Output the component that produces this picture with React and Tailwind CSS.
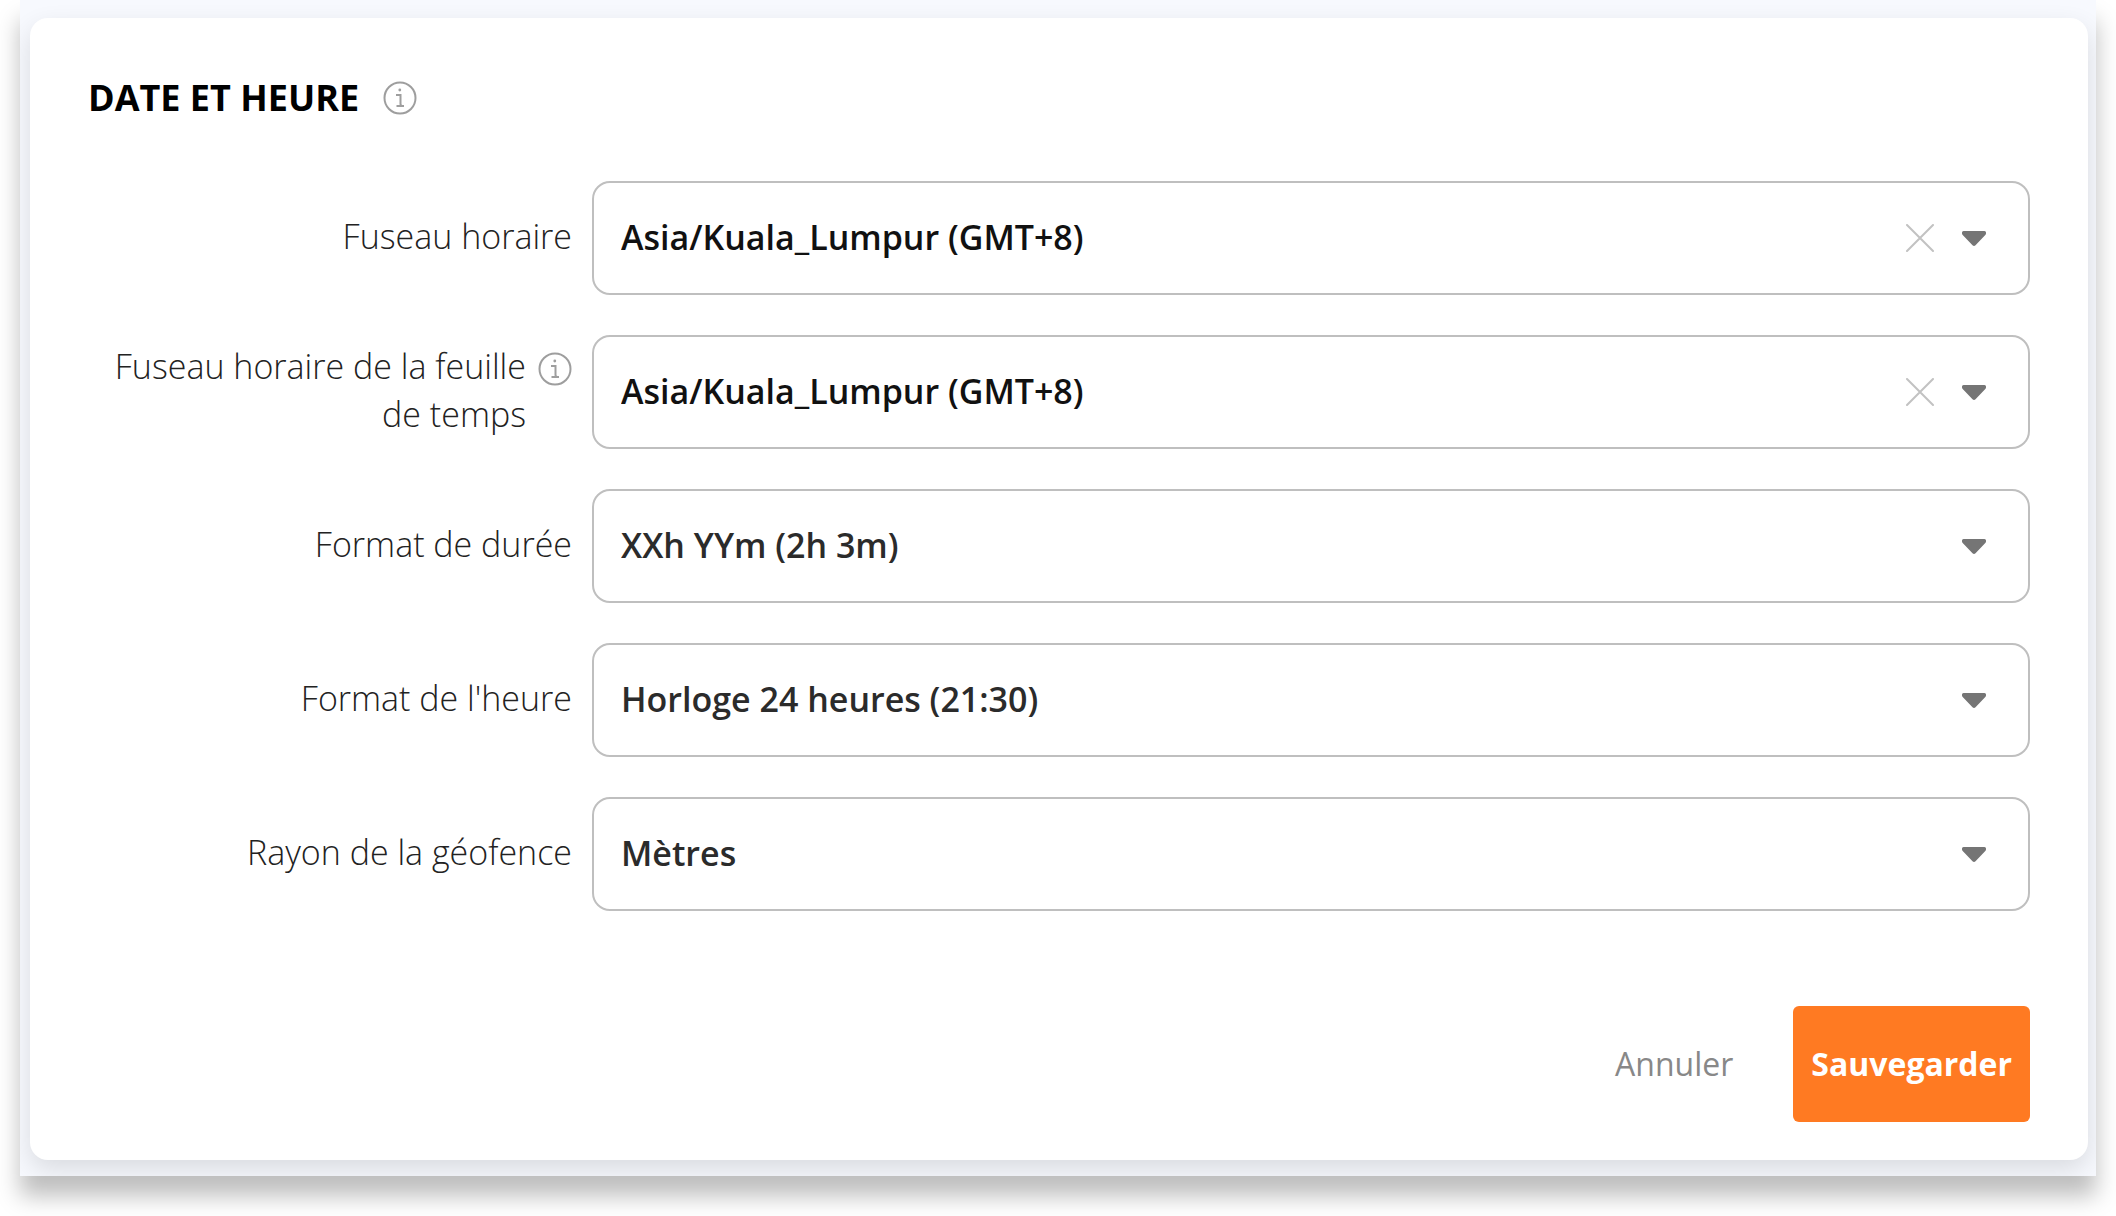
import React from "react";

function InfoIcon() {
  return (
    <svg viewBox="0 0 34 34" className="size-[34px]" fill="none" stroke="#9e9e9e" strokeWidth="2" aria-hidden="true">
      <circle cx="17" cy="17" r="15.5" />
      <path d="M13 14h4.5v9q0 2 2 2h1.5M13.5 25h5" />
      <circle cx="16.8" cy="9" r="1.4" fill="#9e9e9e" stroke="none" />
    </svg>
  );
}

function ClearIcon() {
  return (
    <svg viewBox="0 0 28 28" className="size-7" fill="none" stroke="#c2c2c2" strokeWidth="2" strokeLinecap="round" aria-hidden="true">
      <path d="M1 1l26 26M27 1L1 27" />
    </svg>
  );
}

function CaretIcon() {
  return (
    <svg viewBox="0 0 24 15" className="h-[15px] w-6" fill="#757575" aria-hidden="true">
      <path d="M1.5 0h21q1.5 0 1.5 1.5v1q0 .8-.7 1.5l-9.8 10.2q-1.5 1.4-3 0L.7 4Q0 3.3 0 2.5v-1Q0 0 1.5 0z" />
    </svg>
  );
}

const fields = [
  { id: "timezone", label: "Fuseau horaire", value: "Asia/Kuala_Lumpur (GMT+8)", clearable: true },
  { id: "timesheet-timezone", label: "Fuseau horaire de la feuille de temps", value: "Asia/Kuala_Lumpur (GMT+8)", clearable: true, info: true },
  { id: "duration-format", label: "Format de durée", value: "XXh YYm (2h 3m)" },
  { id: "time-format", label: "Format de l'heure", value: "Horloge 24 heures (21:30)" },
  { id: "geofence-radius", label: "Rayon de la géofence", value: "Mètres" },
];

function Field({ id, label, value, clearable, info }) {
  return (
    <div className="flex items-center gap-5">
      <div className="flex w-[484px] shrink-0 items-start justify-end gap-3 pb-1 text-right text-[34px] leading-[48px] font-light text-[#222222]">
        <label htmlFor={id}>{label}</label>
        {info && (
          <button type="button" aria-label="Information" className="mt-2.5 shrink-0">
            <InfoIcon />
          </button>
        )}
      </div>
      <div className="relative min-w-0 flex-1">
        <select
          id={id}
          className={`block h-[114px] w-full appearance-none rounded-[18px] border-2 border-[#bfbfbf] bg-white pr-36 pb-0.5 pl-[27px] text-[34px] font-semibold ${
            clearable ? "text-[#111111]" : "text-[#2b2b2b]"
          }`}
        >
          <option>{value}</option>
        </select>
        <div className="pointer-events-none absolute inset-y-0 right-11 flex items-center gap-7">
          {clearable && (
            <button type="button" aria-label="Effacer" className="pointer-events-auto">
              <ClearIcon />
            </button>
          )}
          <CaretIcon />
        </div>
      </div>
    </div>
  );
}

export default function App() {
  return (
    <div className="bg-white px-5 pb-10 font-['Open_Sans',sans-serif]">
      <main className="bg-[#f7f9fe] shadow-[0_20px_22px_rgba(0,0,0,0.26)]">
        <div className="overflow-hidden pt-[18px] pr-2 pb-4 pl-[10px]">
          <form className="rounded-[18px] bg-white px-[58px] pt-14 pb-[38px] shadow-[0_10px_26px_rgba(0,0,0,0.12)]">
            <div className="flex items-center gap-6">
              <h1 className="text-[36px] leading-[48px] font-bold text-black">DATE ET HEURE</h1>
              <button type="button" aria-label="Information">
                <InfoIcon />
              </button>
            </div>
            <div className="mt-[59px] flex flex-col gap-10">
              {fields.map((f) => (
                <Field key={f.id} {...f} />
              ))}
            </div>
            <div className="mt-[95px] flex items-center justify-end gap-[60px]">
              <button type="button" className="text-[32px] text-[#888888]">
                Annuler
              </button>
              <button type="submit" className="h-[116px] rounded-md bg-[#ff7a22] px-[18px] text-[32px] font-bold text-white">
                Sauvegarder
              </button>
            </div>
          </form>
        </div>
      </main>
    </div>
  );
}
